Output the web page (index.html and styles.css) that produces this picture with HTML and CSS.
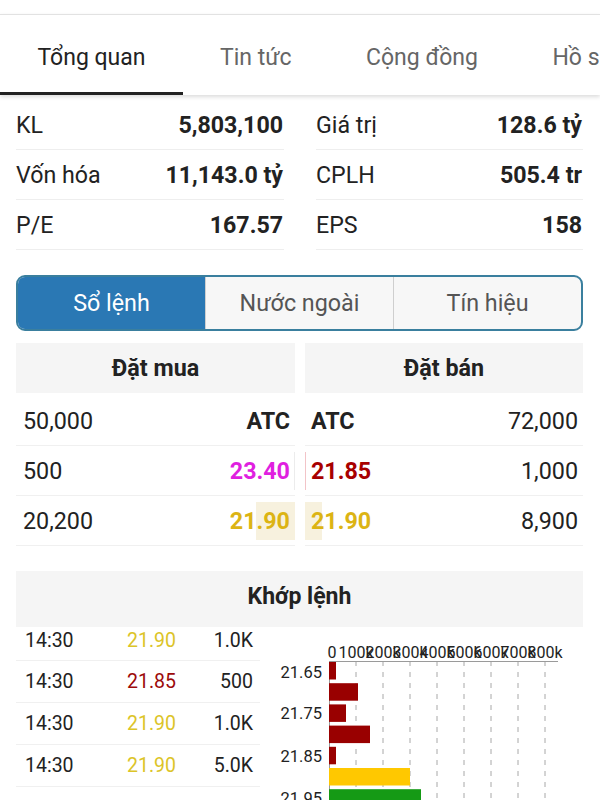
FILE: index.html
```html
<!DOCTYPE html>
<html lang="vi">
<head>
<meta charset="utf-8">
<title>Tổng quan</title>
<link rel="stylesheet" href="styles.css">
</head>
<body>
<div class="page">
  <nav class="tabs">
    <div class="tab active">Tổng quan</div>
    <div class="tab">Tin tức</div>
    <div class="tab">Cộng đồng</div>
    <div class="tab">Hồ sơ</div>
  </nav>

  <section class="stats">
    <div class="stat-col">
      <div class="stat-row"><span class="lbl">KL</span><span class="val">5,803,100</span></div>
      <div class="stat-row"><span class="lbl">Vốn hóa</span><span class="val">11,143.0 tỷ</span></div>
      <div class="stat-row"><span class="lbl">P/E</span><span class="val">167.57</span></div>
    </div>
    <div class="stat-col">
      <div class="stat-row"><span class="lbl">Giá trị</span><span class="val">128.6 tỷ</span></div>
      <div class="stat-row"><span class="lbl">CPLH</span><span class="val">505.4 tr</span></div>
      <div class="stat-row"><span class="lbl">EPS</span><span class="val">158</span></div>
    </div>
  </section>

  <div class="segment">
    <div class="seg active">Sổ lệnh</div>
    <div class="seg">Nước ngoài</div>
    <div class="seg">Tín hiệu</div>
  </div>

  <section class="book">
    <div class="book-col buy">
      <div class="book-head">Đặt mua</div>
      <div class="book-row"><span>50,000</span><span class="b">ATC</span></div>
      <div class="book-row mark-l"><span>500</span><span class="b ceil">23.40</span></div>
      <div class="book-row flash-l"><span>20,200</span><span class="b ref">21.90</span></div>
    </div>
    <div class="book-col sell">
      <div class="book-head">Đặt bán</div>
      <div class="book-row"><span class="b">ATC</span><span>72,000</span></div>
      <div class="book-row mark-r"><span class="b down">21.85</span><span>1,000</span></div>
      <div class="book-row flash-r"><span class="b ref">21.90</span><span>8,900</span></div>
    </div>
  </section>

  <div class="match-head">Khớp lệnh</div>

  <section class="match">
    <div class="trades">
      <div class="trade"><span class="t">14:30</span><span class="p ref-l">21.90</span><span class="v">1.0K</span></div>
      <div class="trade"><span class="t">14:30</span><span class="p down">21.85</span><span class="v">500</span></div>
      <div class="trade"><span class="t">14:30</span><span class="p ref-l">21.90</span><span class="v">1.0K</span></div>
      <div class="trade"><span class="t">14:30</span><span class="p ref-l">21.90</span><span class="v">5.0K</span></div>
    </div>
    <div class="chart">
      <svg width="313" height="173" viewBox="0 0 313 173">
        <g class="grid">
          <line x1="86" y1="34" x2="86" y2="173"/>
          <line x1="113" y1="34" x2="113" y2="173"/>
          <line x1="140" y1="34" x2="140" y2="173"/>
          <line x1="167" y1="34" x2="167" y2="173"/>
          <line x1="194" y1="34" x2="194" y2="173"/>
          <line x1="221" y1="34" x2="221" y2="173"/>
          <line x1="248" y1="34" x2="248" y2="173"/>
          <line x1="275" y1="34" x2="275" y2="173"/>
        </g>
        <line class="axis" x1="59" y1="34.5" x2="288" y2="34.5"/>
        <line class="axis" x1="59.5" y1="34" x2="59.5" y2="173"/>
        <g class="xlab">
          <text x="62" y="31">0</text>
          <text x="86" y="31">100k</text>
          <text x="113" y="31">200k</text>
          <text x="140" y="31">300k</text>
          <text x="167" y="31">400k</text>
          <text x="194" y="31">500k</text>
          <text x="221" y="31">600k</text>
          <text x="248" y="31">700k</text>
          <text x="275" y="31">800k</text>
        </g>
        <g class="ylab">
          <text x="52" y="51">21.65</text>
          <text x="52" y="92">21.75</text>
          <text x="52" y="135">21.85</text>
          <text x="52" y="177">21.95</text>
        </g>
        <rect class="bar-r" x="59" y="35" width="7" height="17.5"/>
        <rect class="bar-r" x="59" y="56.2" width="29" height="17.5"/>
        <rect class="bar-r" x="59" y="77.4" width="17" height="17.5"/>
        <rect class="bar-r" x="59" y="98.6" width="41" height="17.5"/>
        <rect class="bar-r" x="59" y="119.8" width="7" height="17.5"/>
        <rect class="bar-y" x="59" y="141" width="81" height="17.5"/>
        <rect class="bar-g" x="59" y="162.2" width="92" height="17.5"/>
      </svg>
    </div>
  </section>
</div>
</body>
</html>
```

FILE: styles.css
```css
* { box-sizing: border-box; }

html, body {
  margin: 0;
  padding: 0;
  background: #ffffff;
}

body {
  font-family: Roboto, "Noto Sans", "Liberation Sans", sans-serif;
  color: #222222;
  width: 600px;
  height: 800px;
  overflow: hidden;
}

.page {
  padding-top: 14px;
}

/* Tabs */
.tabs {
  display: flex;
  height: 81px;
  border-top: 1px solid #e2e2e2;
  box-shadow: 0 2px 4px rgba(0, 0, 0, 0.14);
  white-space: nowrap;
  overflow: hidden;
  position: relative;
}

.tab {
  flex: none;
  padding: 4px 37px 0 37.5px;
  font-size: 23px;
  line-height: 77px;
  color: #666666;
  border-bottom: 3px solid transparent;
}

.tab.active {
  color: #222222;
  border-bottom-color: #222222;
}

/* Stats */
.stats {
  display: grid;
  grid-template-columns: 268px 267px;
  column-gap: 32px;
  padding: 5px 17px 0 16px;
}

.stat-row {
  display: flex;
  justify-content: space-between;
  align-items: center;
  height: 50px;
  border-bottom: 1px solid #eeeeee;
  font-size: 23.2px;
  padding-top: 1px;
}

.stat-row .val {
  font-weight: 700;
  padding-right: 1px;
}

/* Segment control */
.segment {
  display: flex;
  margin: 25px 17px 0 16px;
  height: 56px;
  border: 2px solid #3a7f9e;
  border-radius: 9px;
  overflow: hidden;
  background: #f7f7f7;
}

.seg {
  flex: 1;
  display: flex;
  align-items: center;
  justify-content: center;
  font-size: 23.3px;
  color: #555555;
  border-left: 1px solid #cfcfcf;
}

.seg:first-child { border-left: none; }

.seg.active {
  background: #2a78b4;
  color: #ffffff;
}

/* Order book */
.book {
  display: grid;
  grid-template-columns: 279px 278px;
  column-gap: 10px;
  margin: 12px 17px 0 16px;
}

.book-head {
  height: 50px;
  display: flex;
  align-items: center;
  justify-content: center;
  background: #f5f5f5;
  font-size: 23.3px;
  font-weight: 700;
  margin-bottom: 3px;
}

.book-row {
  display: flex;
  justify-content: space-between;
  align-items: center;
  height: 50px;
  border-bottom: 1px solid #f0f0f0;
  font-size: 23.3px;
  padding: 0 5px 0 7px;
}

.sell .book-row { padding: 0 5px 0 6px; }

.b { font-weight: 700; }
.ceil { color: #e01fe0; }
.down { color: #a80000; }
.ref { color: #dcb414; }

.mark-l {
  background: linear-gradient(#ececec, #ececec) right center / 1px 38px no-repeat;
}
.mark-r {
  background: linear-gradient(#f2c4c8, #f2c4c8) left center / 1px 38px no-repeat;
}
.flash-l {
  background: linear-gradient(#f7f1de, #f7f1de) right center / 39px 38px no-repeat;
}
.flash-r {
  background: linear-gradient(#f7f1de, #f7f1de) left center / 17px 38px no-repeat;
}

/* Matched orders */
.match-head {
  margin: 25px 17px 0 16px;
  height: 56px;
  padding-bottom: 5px;
  display: flex;
  align-items: center;
  justify-content: center;
  background: #f5f5f5;
  font-size: 23px;
  font-weight: 700;
}

.match {
  display: flex;
  padding-left: 16px;
}

.trades {
  width: 244px;
  flex: none;
}

.trade {
  display: flex;
  align-items: center;
  height: 42px;
  border-bottom: 1px solid #f0f0f0;
  font-size: 19.5px;
  line-height: 26px;
}

.trade:first-child {
  height: 34px;
  align-items: flex-start;
  line-height: 28px;
}

.trade .t { width: 111px; padding-left: 9px; }
.trade .p { width: 49px; text-align: right; }
.trade .v { width: 77px; text-align: right; }

.ref-l { color: #dcc428; }
.trade .down { color: #9c0a0a; }

.chart {
  margin-left: 10px;
  flex: none;
}

.chart svg { display: block; }

.grid line {
  stroke: #a8a8a8;
  stroke-width: 1;
  stroke-dasharray: 5 6;
}

.axis {
  stroke: #9a9a9a;
  stroke-width: 1;
}

.xlab text {
  font-family: Roboto, "Liberation Sans", sans-serif;
  font-size: 16px;
  fill: #222222;
  text-anchor: middle;
}

.ylab text {
  font-family: Roboto, "Liberation Sans", sans-serif;
  font-size: 16.5px;
  fill: #222222;
  text-anchor: end;
}

.bar-r { fill: #990000; }
.bar-y { fill: #ffc800; }
.bar-g { fill: #159a15; }
```
